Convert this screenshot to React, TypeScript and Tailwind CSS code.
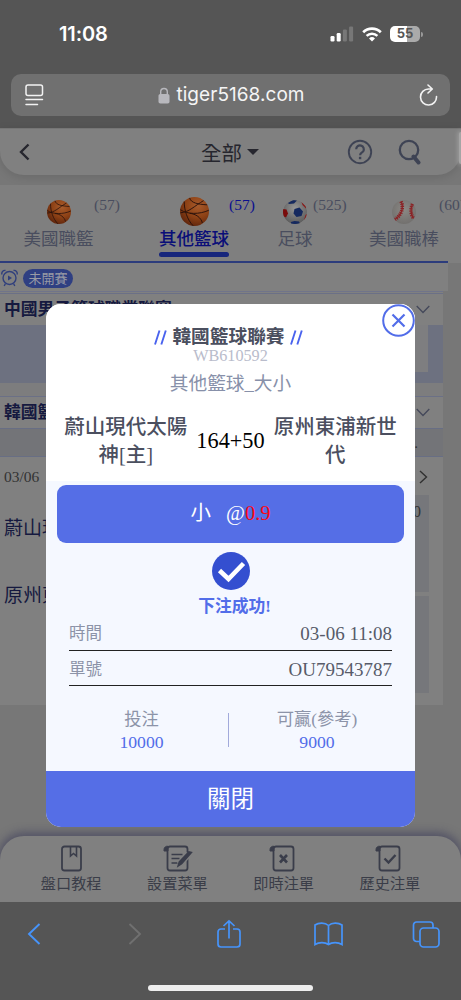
import React from 'react';

interface SportTab {
  name: string;
  count: string;
  ball: 'basketball' | 'soccer' | 'baseball';
  active?: boolean;
  cell: string;
  countPos: string;
}

const tabs: SportTab[] = [
  { name: '美國職籃', count: '(57)', ball: 'basketball', cell: 'w-[117px]', countPos: 'left-[94px]' },
  { name: '其他籃球', count: '(57)', ball: 'basketball', active: true, cell: 'w-[154px]', countPos: 'left-[112px]' },
  { name: '足球', count: '(525)', ball: 'soccer', cell: 'w-[48px]', countPos: 'left-[42px]' },
  { name: '美國職棒', count: '(60)', ball: 'baseball', cell: 'w-[170px]', countPos: 'left-[120px]' },
];

const Ball: React.FC<{ type: SportTab['ball']; className: string }> = ({ type, className }) => {
  if (type === 'basketball') {
    return (
      <svg viewBox="0 0 24 24" className={className}>
        <defs>
          <radialGradient id="orange" cx="0.62" cy="0.3" r="0.75">
            <stop offset="0" stopColor="#a85b2b" />
            <stop offset="0.55" stopColor="#8d4115" />
            <stop offset="1" stopColor="#5d240c" />
          </radialGradient>
        </defs>
        <circle cx="12" cy="12" r="12" fill="url(#orange)" />
        <g fill="none" stroke="#2a120b" strokeWidth="0.8">
          <path d="M0.4 13C7 13 12.500 7 19.500 3" />
          <path d="M0.300 10.500C6 14.500 16 14.500 23.800 11" />
          <path d="M3.500 3.800C3.500 11 6 19 11 23.900" />
          <path d="M8 0.800C9 5 15 6 22.500 6.500" />
          <path d="M8 13.500C13 14 17.500 17 18.500 21.500" />
        </g>
      </svg>
    );
  }
  if (type === 'soccer') {
    return (
      <svg viewBox="0 0 24 24" className={className}>
        <defs>
          <clipPath id="soccerClip"><circle cx="12" cy="12" r="12" /></clipPath>
          <radialGradient id="silver" cx="0.5" cy="0.35" r="0.7">
            <stop offset="0" stopColor="#969696" />
            <stop offset="1" stopColor="#565656" />
          </radialGradient>
        </defs>
        <g clipPath="url(#soccerClip)">
          <circle cx="12" cy="12" r="12" fill="url(#silver)" />
          <path d="M11.500 9l5-1.500 3.500 4-1.500 4.500-5 1-3-3.500z" fill="#15295f" />
          <path d="M5 3l5-3 4 .5-3 3-5 .5z" fill="#15295f" />
          <path d="M8 22l3.500-1L16 21.500l1 2.500H8z" fill="#15295f" />
          <path d="M0 9l3.500.5 1.500 4-2 4L0 16z" fill="#790b0b" />
          <path d="M18.500 2l5 5-.5 1.500-3.500-3.500zM22.500 15l1.500-1v5l-3 1z" fill="#8a1d1d" />
        </g>
      </svg>
    );
  }
  return (
    <svg viewBox="0 0 24 24" className={className}>
      <defs>
        <radialGradient id="leather" cx="0.5" cy="0.4" r="0.65">
          <stop offset="0" stopColor="#8b8985" />
          <stop offset="1" stopColor="#706e6c" />
        </radialGradient>
      </defs>
      <circle cx="12" cy="12" r="12" fill="url(#leather)" />
      <g fill="none" stroke="#8b2326">
        <path d="M9 1.500C12.500 8 8.500 16 3 19.500M20.500 4C18 9 19 15 21.500 18.500" strokeWidth="1.300" />
        <path d="M9 1.500C12.500 8 8.500 16 3 19.500M20.500 4C18 9 19 15 21.500 18.500" strokeWidth="3.600" strokeDasharray="1.200 1" />
      </g>
    </svg>
  );
};

const StatusBar = () => (
  <div className="flex h-[74px] items-start justify-between pt-[23px] pr-[38px] pl-[59px] font-['Inter'] text-white">
    <span className="text-[20px] leading-[23px] font-semibold tracking-[-0.1px]">11:08</span>
    <div className="flex items-center pt-[3px]">
      <svg width="24" height="16" viewBox="0 0 24 16">
        <rect x="0.500" y="10" width="4" height="5.500" rx="1.200" fill="#fff" />
        <rect x="6.700" y="7" width="4" height="8.500" rx="1.200" fill="#fff" />
        <rect x="12.900" y="3.500" width="4" height="12" rx="1.200" fill="#777" />
        <rect x="19.100" y="0.500" width="4" height="15" rx="1.200" fill="#777" />
      </svg>
      <svg width="20" height="15" viewBox="0 0 20 15" className="ml-2">
        <path d="M1.200 5.200a12.500 12.500 0 0117.600 0" fill="none" stroke="#fff" strokeWidth="2.700" />
        <path d="M4.600 8.900a7.700 7.700 0 0110.800 0" fill="none" stroke="#fff" strokeWidth="2.500" />
        <path d="M10 14.500L7 11.400a4.300 4.300 0 016 0z" fill="#fff" />
      </svg>
      <div className="ml-[8px] flex h-[16px] w-[30px] items-center justify-center rounded-[5px] bg-linear-to-r from-white from-55% to-[#aaa] to-55% text-[13px] font-bold text-[#555]">
        55
      </div>
      <div className="ml-px h-[5px] w-[2px] rounded-r-full bg-[#999]" />
    </div>
  </div>
);

const AddressBar = () => (
  <div className="mx-[11px] flex h-[42px] items-center justify-between rounded-[10px] bg-[#707070] pr-[12px] pl-[14px]">
    <svg width="19" height="22" viewBox="0 0 19 22" fill="none" stroke="#f2f2f2" strokeWidth="1.500" strokeLinecap="round">
      <rect x="1" y="1" width="16.500" height="10.500" rx="2" />
      <path d="M1 15.500h16.500M1 20.500h11.500" />
    </svg>
    <div className="flex items-center gap-[6px]">
      <svg width="12" height="17" viewBox="0 0 12 17">
        <path d="M2.700 8V4.800a3.300 3.300 0 016.600 0V8" fill="none" stroke="#b8b8bd" strokeWidth="1.400" />
        <rect x="0.500" y="7" width="11" height="9.500" rx="1.800" fill="#b8b8bd" />
      </svg>
      <span className="font-['Inter'] text-[19px] leading-6 tracking-[0.05px] text-[#f5f5f5]">tiger5168.com</span>
    </div>
    <svg width="19" height="22" viewBox="0 0 19 22" fill="none" stroke="#f2f2f2" strokeWidth="1.600" strokeLinecap="round" strokeLinejoin="round">
      <path d="M13 5H9.500A8 8 0 1017.500 12.500M9 1l4.300 4L9 9" />
    </svg>
  </div>
);

const PageHeader = () => (
  <div className="bg-[#777]">
    <header className="flex h-[47px] items-center rounded-b-[24px] border-t border-[#757575] bg-[#808080] pl-[18px] shadow-[0_2px_10px_rgba(0,0,0,0.12)]">
      <svg width="12" height="18" viewBox="0 0 12 18" fill="none" stroke="#26262e" strokeWidth="2.400">
        <path d="M10.500 1.500L3 9l7.500 7.500" />
      </svg>
      <div className="ml-[171px] flex items-center gap-[5px]">
        <span className="pt-[3px] text-[20.500px] leading-6 text-[#26262e]">全部</span>
        <svg width="12" height="6" viewBox="0 0 12 6"><path d="M0 0h12L6 6z" fill="#26262e" /></svg>
      </div>
      <svg width="26" height="26" viewBox="0 0 26 26" fill="none" stroke="#3e4354" className="ml-[88px]">
        <circle cx="13" cy="13" r="11.200" strokeWidth="1.900" />
        <path d="M9.200 10.300a3.800 3.800 0 117 2c-1 1.300-3.100 1.800-3.100 4" strokeWidth="2.200" />
        <path d="M13.100 17.800v2.400" strokeWidth="2.400" />
      </svg>
      <svg width="24" height="26" viewBox="0 0 24 26" fill="none" stroke="#3e4354" className="ml-[25px]">
        <circle cx="11" cy="11" r="9.200" strokeWidth="2.300" />
        <path d="M15.500 17.500l5 6" strokeWidth="4" strokeLinecap="round" />
      </svg>
      {/* Edge of the floating drawer handle */}
      <div className="-mt-[8px] ml-auto h-[32px] w-[2px] rounded-l-full bg-[#a5a5a5] shadow-[0_0_4px_1px_#a0a0a0]" />
    </header>
    <div className="h-[10px]" />
  </div>
);

const SportTabs = () => (
  <nav className="h-[78px] overflow-hidden bg-[#7f7f7f]">
    <div className="flex h-[76px] w-[520px]">
      {tabs.map((tab) => (
        <div key={tab.name} className={`relative flex shrink-0 flex-col items-center ${tab.cell}`}>
          <div className="flex h-[42px] items-end justify-center">
            <Ball type={tab.ball} className={tab.active ? 'mb-px size-[29px]' : 'mb-[3px] size-[24px]'} />
          </div>
          <span
            className={`pt-px text-[17.500px] leading-[23px] whitespace-nowrap ${
              tab.active ? 'font-medium text-[#0a0e78]' : 'text-[#494d5e]'
            }`}
          >
            {tab.name}
          </span>
          {tab.active && <div className="mt-[1px] h-[5px] w-[70px] shrink-0 rounded-full bg-[#17267c]" />}
          <span
            className={`absolute top-[10px] text-[15.500px] leading-5 ${tab.countPos} ${
              tab.active ? 'text-[#0b0f8f]' : 'text-[#494d5e]'
            }`}
          >
            {tab.count}
          </span>
        </div>
      ))}
    </div>
    <div className="h-[2px] w-[448px] bg-[#2c3c7c]" />
  </nav>
);

const Chevron = () => (
  <svg width="14" height="9" viewBox="0 0 14 9" fill="none" stroke="#44485a" strokeWidth="1.300">
    <path d="M0.700 1L7 7.500 13.300 1" />
  </svg>
);

const LeagueRow = ({ title }: { title: string }) => (
  <div className="flex h-[32px] items-center justify-between border-t border-[#6b7086] pr-[13px] pl-[4px]">
    <span className="pt-px text-[16.800px] leading-6 font-bold text-[#15193f]">{title}</span>
    <Chevron />
  </div>
);

const MatchList = () => (
  <main className="h-[573px] overflow-hidden bg-[#777]">
    <div className="flex h-[28px] w-[448px] items-center gap-[5px] bg-[#808080]">
      <svg width="17" height="18" viewBox="0 0 17 18" fill="none" stroke="#303f7d" strokeWidth="1.400" className="ml-px mt-[2px]">
        <circle cx="8.500" cy="9" r="6.500" />
        <path d="M1 5.500A3 3 0 014.500 1.500M16 5.500a3 3 0 00-3.500-4M4.500 14.500L3.200 17M12.500 14.500l1.300 2.500" />
        <path d="M7 6.500v5L11 9z" fill="#303f7d" stroke="none" />
      </svg>
      <span className="mt-[2px] h-[19px] w-[50px] rounded-full bg-[#2f3f82] text-center text-[13px] leading-[19px] text-[#999ba5]">未開賽</span>
    </div>
    <div className="w-[443px] bg-[#808080]">
      <div className="border-t border-[#70748a] pt-px">
        <LeagueRow title="中國男子籃球職業聯賽" />
      </div>
      <div className="h-[58px] bg-[#6d7180] pl-[390px]">
        <div className="h-[47px] w-[38px] bg-[#7e7e80]" />
      </div>
      <div className="h-[13px] bg-[#7d7d7e]" />
      <LeagueRow title="韓國籃球聯賽" />
      <div className="flex h-[29px] items-center justify-end border-y border-[#686e84] bg-[#737478] pr-[25px] text-[15px] leading-5 text-[#333]">.</div>
      <div className="flex h-[248px] justify-between pt-[10px] pr-[14px] pl-[4px]">
        <div>
          <p className="text-[15.500px] leading-[20px] text-[#333]">03/06</p>
          <p className="mt-[28px] text-[19px] leading-[28px] text-[#15193f]">蔚山現代太陽神[主]</p>
          <p className="mt-[39px] text-[19px] leading-[28px] text-[#15193f]">原州東浦新世代</p>
        </div>
        <div className="flex w-[44px] flex-col">
          <svg width="9" height="14" viewBox="0 0 9 14" fill="none" stroke="#303030" strokeWidth="1.400" className="ml-[34px] mt-[3px]">
            <path d="M1 1l6.500 6L1 13" />
          </svg>
          <div className="mt-[11px] h-[97px] bg-[#76777b] pt-[7px] pr-[8px] text-right text-[16px] leading-5 text-[#333]">0</div>
          <div className="mt-[4px] h-[97px] bg-[#76777b]" />
        </div>
      </div>
    </div>
  </main>
);

const ScrollShape = () => (
  <>
    <rect x="4.500" y="1.500" width="20" height="24" rx="2.500" />
    <path d="M5 6H1V4.500A3.300 3.300 0 015 1.300z" fill="#3a3d4a" strokeWidth="1" />
  </>
);

const menuItems = [
  {
    label: '盤口教程',
    icon: (
      <>
        <rect x="5" y="1.500" width="19" height="24" rx="2.500" />
        <path d="M13.500 2v9l3-2.500 3 2.500V2" strokeWidth="1.600" />
      </>
    ),
  },
  {
    label: '設置菜單',
    icon: (
      <>
        <ScrollShape />
        <path d="M8.500 9.500h11M8.500 13.500h8M8.500 18h6" strokeWidth="1.600" />
        <path d="M26 9L16.500 19.500" stroke="#808080" strokeWidth="6" />
        <path d="M28 7.500L18.500 18.500l-3 2 1-3.500L26 7z" fill="#3a3d4a" strokeWidth="2" />
      </>
    ),
  },
  {
    label: '即時注單',
    icon: (
      <>
        <ScrollShape />
        <path d="M11 10l7 7.500M18 10l-7 7.500" strokeWidth="2.600" />
      </>
    ),
  },
  {
    label: '歷史注單',
    icon: (
      <>
        <ScrollShape />
        <path d="M9.500 13.500l4 4 7-7.500" strokeWidth="2.400" />
      </>
    ),
  },
];

const BottomMenu = () => (
  <div className="bg-[#777]">
    <div className="flex h-[66px] rounded-t-[24px] bg-[#808080] px-[18px] pt-[9px] shadow-[0_-2px_8px_2px_rgba(50,50,85,0.5)]">
      {menuItems.map((item) => (
        <div key={item.label} className="flex flex-1 flex-col items-center">
          <svg width="29" height="27" viewBox="0 0 29 27" fill="none" stroke="#3a3d4a" strokeWidth="1.800" className="overflow-visible">
            {item.icon}
          </svg>
          <span className="mt-px text-[15.200px] leading-[21px] whitespace-nowrap text-[#3a3d48]">{item.label}</span>
        </div>
      ))}
    </div>
  </div>
);

const BrowserToolbar = () => (
  <footer className="h-[98px] bg-[#555]">
    <div className="flex h-[64px] items-center justify-between pr-[21px] pl-[27px] text-[#4694fb]">
      <svg width="14" height="24" viewBox="0 0 14 24" fill="none" stroke="currentColor" strokeWidth="1.900">
        <path d="M12.500 2L2 12l10.500 10" />
      </svg>
      <svg width="14" height="24" viewBox="0 0 14 24" fill="none" stroke="#707070" strokeWidth="1.900" className="ml-[18px]">
        <path d="M1.500 2L12 12 1.500 22" />
      </svg>
      <svg width="26" height="30" viewBox="0 0 26 30" fill="none" stroke="currentColor" strokeWidth="1.700" className="mr-[3px] ml-[5px]">
        <path d="M9 10H5a3 3 0 00-3 3v12a3 3 0 003 3h16a3 3 0 003-3V13a3 3 0 00-3-3h-4M13 19.500V2M7.500 7L13 1.800 18.500 7" />
      </svg>
      <svg width="29" height="24" viewBox="0 0 29 24" fill="none" stroke="currentColor" strokeWidth="1.700">
        <path d="M14.500 3.500C11 .2 4.500.5 1 3v19.500c4-2.500 10-2.500 13.500 0 3.500-2.500 9.500-2.500 13.500 0V3C24.500.5 18 .2 14.500 3.500zM14.500 3.500v19" />
      </svg>
      <svg width="28" height="27" viewBox="0 0 28 27" fill="none" stroke="currentColor" strokeWidth="1.700">
        <rect x="8" y="7" width="19" height="19" rx="3.500" />
        <path d="M8 20.500H4.500A3 3 0 011.500 17.500V4A3 3 0 014.500 1H18a3 3 0 013 3v3" />
      </svg>
    </div>
    <div className="mx-auto mt-[19px] h-[6px] w-[165px] rounded-full bg-[#eee]" />
  </footer>
);

const Slashes = () => (
  <svg width="13" height="15" viewBox="0 0 13 15" stroke="#4a63ee" strokeWidth="1.900">
    <path d="M1 14.500L5.500 0.500M7.300 14.500L11.800 0.500" />
  </svg>
);

const BetModal = () => (
  <div className="absolute top-[304px] left-[46px] flex h-[523px] w-[369px] flex-col overflow-hidden rounded-[15px] bg-[#f5f8ff]">
    <button className="absolute top-0 right-0" aria-label="close">
      <svg width="33" height="33" viewBox="0 0 33 33" fill="none" stroke="#526de9" strokeWidth="2">
        <circle cx="16.500" cy="16.500" r="15.300" />
        <path d="M10.500 10.500l12 12M22.500 10.500l-12 12" strokeWidth="2.200" />
      </svg>
    </button>

    {/* League and teams */}
    <div className="h-[177px] bg-white pt-[20px] text-center">
      <div className="flex h-[26px] items-center justify-center gap-[5px] pr-[4px]">
        <Slashes />
        <span className="text-[18.700px] leading-[26px] font-bold text-[#4b4f5f]">韓國籃球聯賽</span>
        <Slashes />
      </div>
      <p className="text-[16.200px] leading-[13px] text-[#b9bccb]">WB610592</p>
      <p className="mt-[8px] text-[18.700px] leading-[26px] text-[#8790a9]">其他籃球_大小</p>
      <div className="mt-[16px] flex items-center justify-center gap-[9px] text-[20.500px] leading-[28px] font-medium text-[#4b4f5f]">
        <div className="w-[123px]">蔚山現代太陽神[主]</div>
        <div className="text-[22.300px] font-normal whitespace-nowrap text-black">164+50</div>
        <div className="w-[123px]">原州東浦新世代</div>
      </div>
    </div>

    <div className="mx-[11px] mt-[4px] flex h-[58px] shrink-0 items-center justify-center rounded-[9px] bg-[#556ee6] pb-[2px] text-[20.500px] leading-7 whitespace-pre text-white">
      小<span className="ml-[15px]">@<span className="text-[#fa0714]">0.9</span></span>
    </div>

    <div className="mt-[9px] flex shrink-0 flex-col items-center">
      <svg width="38" height="38" viewBox="0 0 38 38">
        <circle cx="19" cy="19" r="19" fill="#344fd0" />
        <path d="M7.500 18.500l9 8.500L31.500 11.500" fill="none" stroke="#fff" strokeWidth="4.600" />
      </svg>
      <span className="mt-[6px] pl-[8px] text-[16.800px] leading-[22px] font-bold text-[#526de9]">下注成功!</span>
    </div>

    <div className="mx-[23px] shrink-0 text-[18.700px] text-[#575b69]">
      <div className="flex h-[33px] items-center justify-between border-b border-[#222] pt-px">
        <span className="text-[16.500px] text-[#8c93a8]">時間</span>
        <span className="text-[19px]">03-06 11:08</span>
      </div>
      <div className="mt-[2px] flex h-[33px] items-center justify-between border-b border-[#222] pt-[3px]">
        <span className="text-[16.500px] text-[#8c93a8]">單號</span>
        <span className="text-[19px]">OU79543787</span>
      </div>
    </div>

    <div className="mt-[22px] flex flex-1 px-[9px] text-center text-[17.700px] leading-[20px] text-[#526de9]">
      <div className="w-[173px]">
        <p className="text-[17.300px] leading-[24px] text-[#8c93a8]">投注</p>
        <p>10000</p>
      </div>
      <div className="mt-[5px] h-[34px] w-px bg-[#a2aadb]" />
      <div className="w-[176px]">
        <p className="text-[17.300px] leading-[24px] text-[#8c93a8]">可贏(參考)</p>
        <p>9000</p>
      </div>
    </div>

    <button className="h-[56px] shrink-0 bg-[#556ee6] pt-[2px] text-[23.500px] text-white">關閉</button>
  </div>
);

const App: React.FC = () => {
  return (
    <div
      lang="zh-Hant"
      className="relative flex h-[1000px] w-[461px] flex-col overflow-hidden bg-[#555] font-['Liberation_Serif','Noto_Sans_CJK_TC',serif]"
    >
      <div className="h-[128px] shrink-0 bg-[#555]">
        <StatusBar />
        <AddressBar />
      </div>
      <PageHeader />
      <SportTabs />
      <MatchList />
      <BottomMenu />
      <BrowserToolbar />
      <BetModal />
    </div>
  );
};

export default App;
